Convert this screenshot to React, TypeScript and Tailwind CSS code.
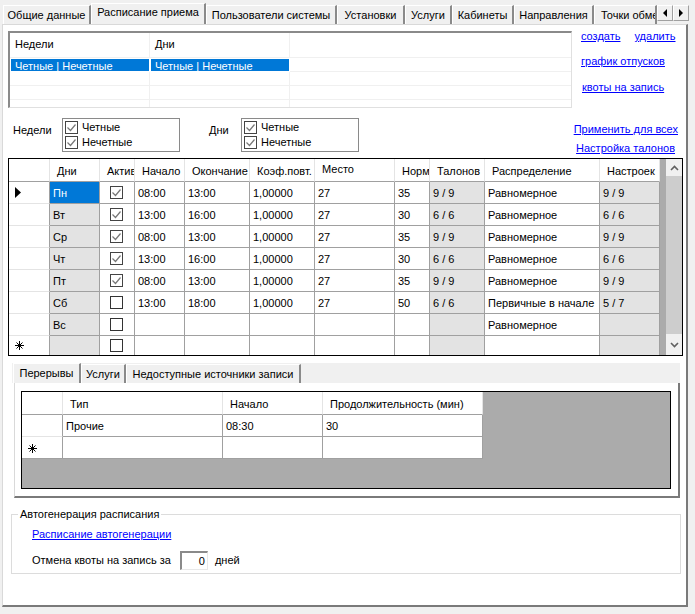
import React from "react";

const FONT = "font-['Liberation_Sans',Arial,sans-serif] text-[11px] leading-[13px] text-black";

const mainTabs = [
  { label: "Общие данные", w: "w-[88px]" },
  { label: "Расписание приема", w: "w-[115px]", active: true },
  { label: "Пользователи системы", w: "w-[131px]" },
  { label: "Установки", w: "w-[68px]" },
  { label: "Услуги", w: "w-[47px]" },
  { label: "Кабинеты", w: "w-[62px]" },
  { label: "Направления", w: "w-[80px]" },
  { label: "Точки обмена", w: "w-[63px]", clipped: true },
];

const subTabs = [
  { label: "Перерывы", w: "w-[68px]", active: true, sub: true },
  { label: "Услуги", w: "w-[45px]", sub: true },
  { label: "Недоступные источники записи", w: "w-[175px]", sub: true },
];

const scheduleCols = "grid-cols-[41px_50px_35px_50px_65px_65px_80px_35px_55px_115px_60px]";
const scheduleHead = ["", "Дни", "Актив", "Начало", "Окончание", "Коэф.повт.", "Место", "Норм", "Талонов", "Распределение", "Настроек"];

const scheduleRows = [
  { day: "Пн", on: true, from: "08:00", to: "13:00", k: "1,00000", place: "27", norm: "35", tal: "9 / 9", dist: "Равномерное", cfg: "9 / 9" },
  { day: "Вт", on: true, from: "13:00", to: "16:00", k: "1,00000", place: "27", norm: "30", tal: "6 / 6", dist: "Равномерное", cfg: "6 / 6" },
  { day: "Ср", on: true, from: "08:00", to: "13:00", k: "1,00000", place: "27", norm: "35", tal: "9 / 9", dist: "Равномерное", cfg: "9 / 9" },
  { day: "Чт", on: true, from: "13:00", to: "16:00", k: "1,00000", place: "27", norm: "30", tal: "6 / 6", dist: "Равномерное", cfg: "6 / 6" },
  { day: "Пт", on: true, from: "08:00", to: "13:00", k: "1,00000", place: "27", norm: "35", tal: "9 / 9", dist: "Равномерное", cfg: "9 / 9" },
  { day: "Сб", on: false, from: "13:00", to: "18:00", k: "1,00000", place: "27", norm: "50", tal: "6 / 6", dist: "Первичные в начале", cfg: "5 / 7" },
  { day: "Вс", on: false, from: "", to: "", k: "", place: "", norm: "", tal: "", dist: "Равномерное", cfg: "" },
  { day: "", on: false, from: "", to: "", k: "", place: "", norm: "", tal: "", dist: "", cfg: "" },
];

function Star() {
  return (
    <svg width="9" height="9" viewBox="0 0 9 9" className="text-black" stroke="currentColor" strokeWidth="1">
      <path d="M4.5 0v9M0 4.5h9M1.5 1.5l6 6M7.5 1.5l-6 6" />
    </svg>
  );
}

function Check({ on, size = 13 }: { on: boolean; size?: number }) {
  return (
    <svg width={size} height={size} viewBox="0 0 13 13" className="shrink-0">
      <rect x="0.5" y="0.5" width="12" height="12" fill="#fff" stroke={on ? "#444" : "#333"} />
      {on && <path d="M2.5 6.5l3 3 5-6" fill="none" stroke="#777" strokeWidth="1.2" />}
    </svg>
  );
}

function Link({ children, className = "" }: { children: React.ReactNode; className?: string }) {
  return <span className={`text-[#0000ff] underline whitespace-nowrap ${className}`}>{children}</span>;
}

function Tab({ label, w, active, clipped, sub }: { label: string; w: string; active?: boolean; clipped?: boolean; sub?: boolean }) {
  const size = active ? (sub ? "h-[20px] pt-[3px]" : "h-[21px] pt-[2px]") : "h-[19px] pt-[3px]";
  return (
    <div
      className={`${w} ${size} ${clipped ? "pl-[6px]" : "text-center"} shrink-0 overflow-hidden whitespace-nowrap bg-[#f0f0f0] border-t border-l border-t-white border-l-white border-r-2 border-r-[#8a8a8a]`}
    >
      {label}
    </div>
  );
}

function WeekBox() {
  return (
    <div className="w-[118px] h-[34px] border border-[#8a8a8a] flex flex-col pl-[2px] pt-[2px] gap-[2px]">
      <div className="flex items-center gap-[4px] h-[13px]"><Check on /><span>Четные</span></div>
      <div className="flex items-center gap-[4px] h-[13px]"><Check on /><span>Нечетные</span></div>
    </div>
  );
}

function ScheduleRow({ row, idx }: { row: (typeof scheduleRows)[number]; idx: number }) {
  const h = idx === 7 ? "h-[19px]" : "h-[22px]";
  const line = idx === 7 ? "" : "border-b border-b-[#a0a0a0]";
  const cell = `${h} ${line} border-r border-r-[#a0a0a0] pl-[3px] pt-[2px] flex items-center whitespace-nowrap overflow-hidden`;
  const grey = `${cell} bg-[#e3e3e3]`;
  return (
    <>
      <div className={`${h} ${idx === 7 ? "" : "border-b border-b-[#e4e4e4]"} border-r border-r-[#a0a0a0] flex items-center pl-[6px]`}>
        {idx === 0 && (
          <svg width="6" height="11" viewBox="0 0 6 11"><path d="M0 0l6 5.5-6 5.5z" fill="#000" /></svg>
        )}
        {idx === 7 && <Star />}
      </div>
      <div className={idx === 0 ? `${cell} bg-[#0078d7] text-white` : grey}>{row.day}</div>
      <div className={`${h} ${line} border-r border-r-[#a0a0a0] pl-[10px] flex items-center`}><Check on={row.on} /></div>
      <div className={cell}>{row.from}</div>
      <div className={cell}>{row.to}</div>
      <div className={cell}>{row.k}</div>
      <div className={cell}>{row.place}</div>
      <div className={cell}>{row.norm}</div>
      <div className={grey}>{row.tal}</div>
      <div className={cell}>{row.dist}</div>
      <div className={grey}>{row.cfg}</div>
    </>
  );
}

function ScheduleGrid() {
  return (
    <div className="ml-[5px] w-[675px] h-[198px] border border-black flex overflow-hidden box-border">
      <div className={`w-[651px] grid ${scheduleCols} content-start bg-white`}>
        {scheduleHead.map((h, i) => (
          <div
            key={i}
            className={`h-[23px] border-b border-b-[#a0a0a0] border-r border-r-[#e4e4e4] pl-[7px] flex items-center whitespace-nowrap overflow-hidden ${
              h === "Место" ? "pb-[2px]" : "pt-[2px]"
            }`}
          >
            {h}
          </div>
        ))}
        {scheduleRows.map((r, i) => (
          <ScheduleRow key={i} row={r} idx={i} />
        ))}
      </div>
      <div className="w-[6px] bg-[#ababab]" />
      <div className="w-[16px] bg-[#f0f0f0] flex flex-col">
        <div className="h-[17px] flex items-center justify-center">
          <svg width="9" height="6" viewBox="0 0 9 6"><path d="M1 5l3.5-3.5L8 5" fill="none" stroke="#606060" strokeWidth="1.6" /></svg>
        </div>
        <div className="flex-1 bg-[#cdcdcd]" />
        <div className="h-[21px] flex items-center justify-center">
          <svg width="9" height="6" viewBox="0 0 9 6"><path d="M1 1l3.5 3.5L8 1" fill="none" stroke="#606060" strokeWidth="1.6" /></svg>
        </div>
      </div>
    </div>
  );
}

function BreaksGrid() {
  const cols = "grid-cols-[41px_160px_100px_160px]";
  const cell = "h-[22px] border-b border-r border-[#a0a0a0] pl-[3px] pt-[2px] flex items-center bg-white whitespace-nowrap";
  const head = "h-[23px] border-b border-b-[#a0a0a0] border-r border-r-[#e4e4e4] pl-[7px] pt-[2px] flex items-center bg-white whitespace-nowrap";
  return (
    <div className="ml-[6px] w-[650px] h-[98px] border border-black bg-[#ababab] box-border">
      <div className={`grid ${cols} w-[461px]`}>
        <div className={head} />
        <div className={head}>Тип</div>
        <div className={head}>Начало</div>
        <div className={head}>Продолжительность (мин)</div>
        <div className={`${cell} border-b-[#e4e4e4]`} />
        <div className={cell}>Прочие</div>
        <div className={cell}>08:30</div>
        <div className={cell}>30</div>
        <div className={`${cell} pl-[6px]`}><Star /></div>
        <div className={cell} />
        <div className={cell} />
        <div className={cell} />
      </div>
    </div>
  );
}

export default function App() {
  return (
    <div className={`${FONT} w-[695px] h-[614px] bg-[#f0f0f0] overflow-hidden`}>
      {/* Вкладки */}
      <div className="h-[24px] pl-[3px] flex items-end relative">
        {mainTabs.map((t) => (
          <Tab key={t.label} {...t} />
        ))}
        <div className="absolute left-[657px] top-[5px] flex">
          {["M4 0v8L0 4z", "M0 0v8l4-4z"].map((d) => (
            <div key={d} className="w-[16px] h-[16px] bg-[#f0f0f0] border border-[#a0a0a0] border-t-white border-l-white flex items-center justify-center">
              <svg width="4" height="8" viewBox="0 0 4 8"><path d={d} fill="#000" /></svg>
            </div>
          ))}
        </div>
      </div>

      <div className="ml-[2px] w-[686px] h-[583px] bg-white border-l border-t border-l-[#d9d9d9] border-t-[#d9d9d9] border-r-2 border-b-2 border-r-[#7a7a7a] border-b-[#7a7a7a] box-border">
        {/* Список расписаний */}
        <div className="flex mt-[6px] ml-[5px]">
          <div className="w-[564px] h-[77px] border-t-2 border-l-2 border-t-[#8a8a8a] border-l-[#8a8a8a] border-r border-b border-r-[#e0e0e0] border-b-[#e0e0e0] box-border grid grid-cols-[140px_140px_1fr] grid-rows-[25px_14px_14px_14px_1fr]">
            <div className="border-r border-b border-[#f0f0f0] pl-[5px] pb-[2px] flex items-center">Недели</div>
            <div className="border-r border-b border-[#f0f0f0] pl-[5px] pb-[2px] flex items-center">Дни</div>
            <div className="border-b border-[#f0f0f0]" />
            <div className="bg-[#0078d7] text-white pl-[4px] pt-[1px] mx-[1px] whitespace-nowrap border-t border-b border-white overflow-hidden">Четные | Нечетные</div>
            <div className="bg-[#0078d7] text-white pl-[4px] pt-[1px] mx-[1px] whitespace-nowrap border-t border-b border-white overflow-hidden">Четные | Нечетные</div>
            <div className="border-b border-[#f0f0f0]" />
            <div className="border-r border-b border-[#f0f0f0]" />
            <div className="border-r border-b border-[#f0f0f0]" />
            <div className="border-b border-[#f0f0f0]" />
            <div className="border-r border-b border-[#f0f0f0]" />
            <div className="border-r border-b border-[#f0f0f0]" />
            <div className="border-b border-[#f0f0f0]" />
            <div className="border-r border-[#f0f0f0]" />
            <div className="border-r border-[#f0f0f0]" />
            <div />
          </div>
          <div className="flex flex-col pl-[9px]">
            <div className="flex gap-[14px] mt-[-1px] h-[13px]">
              <Link>создать</Link>
              <Link>удалить</Link>
            </div>
            <Link className="mt-[12px]">график отпусков</Link>
            <Link className="mt-[13px] ml-[1px]">квоты на запись</Link>
          </div>
        </div>

        {/* Фильтры */}
        <div className="flex mt-[10px] h-[34px] items-center">
          <span className="ml-[10px] w-[49px] mb-[9px]">Недели</span>
          <WeekBox />
          <span className="ml-[29px] w-[32px] mb-[9px]">Дни</span>
          <WeekBox />
          <div className="ml-auto mr-[8px] flex flex-col items-end gap-[6px] pt-[5px] h-[40px] mt-[5px]">
            <Link>Применить для всех</Link>
            <Link className="mr-[3px]">Настройка талонов</Link>
          </div>
        </div>

        <div className="mt-[6px]"><ScheduleGrid /></div>

        {/* Нижние вкладки */}
        <div className="mt-[7px] ml-[9px] w-[668px] h-[20px] bg-[#f0f0f0] flex items-end pl-[1px]">
          {subTabs.map((t) => (
            <Tab key={t.label} {...t} />
          ))}
        </div>
        <div className="ml-[11px] w-[666px] h-[115px] bg-white border-l border-l-[#d9d9d9] border-r-2 border-b-2 border-r-[#7a7a7a] border-b-[#7a7a7a] box-border pt-[8px]">
          <BreaksGrid />
        </div>

        {/* Автогенерация */}
        <div className="mt-[16px] ml-[8px] w-[670px] h-[60px] border border-[#dcdcdc] box-border pl-[20px] relative">
          <span className="absolute left-[6px] top-[-7px] bg-white px-[2px]">Автогенерация расписания</span>
          <Link className="block mt-[13px]">Расписание автогенерации</Link>
          <div className="flex items-center mt-[10px] h-[18px]">
            <span>Отмена квоты на запись за</span>
            <div className="ml-[9px] w-[28px] h-[19px] border-t-2 border-l-2 border-t-[#8a8a8a] border-l-[#8a8a8a] border-b border-r border-b-[#e8e8e8] border-r-[#e8e8e8] text-right pr-[2px] leading-[16px] box-border">0</div>
            <span className="ml-[7px]">дней</span>
          </div>
        </div>
      </div>
    </div>
  );
}
